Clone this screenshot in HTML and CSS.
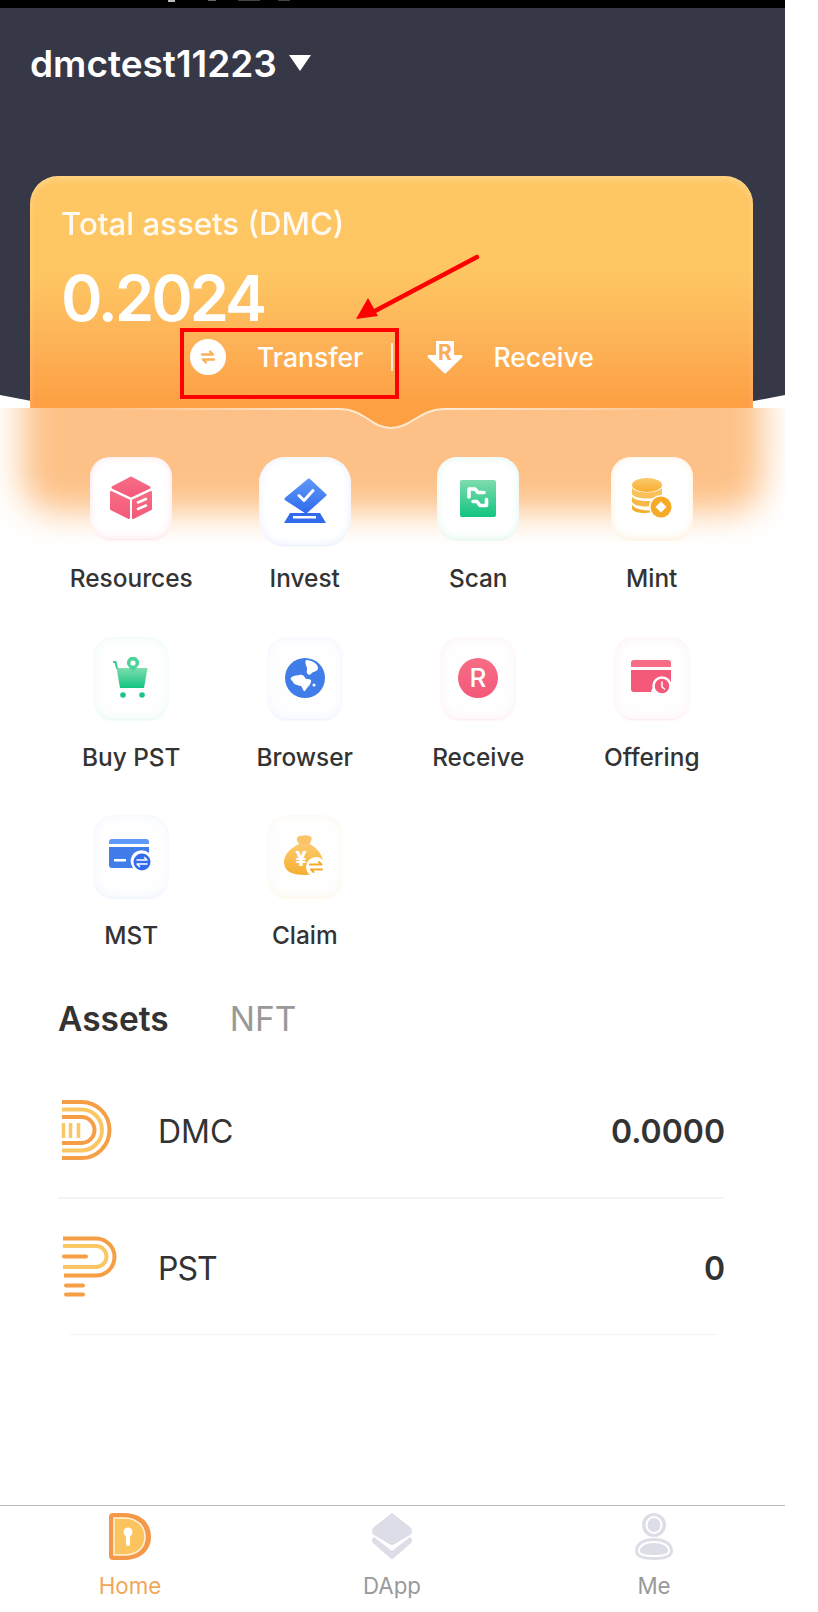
FILE: index.html
```html
<!DOCTYPE html>
<html lang="en">
<head>
  <meta charset="UTF-8">
  <title>Wallet</title>
  <meta name="viewport" content="width=device-width,initial-scale=1">
  <link rel="stylesheet" href="styles.css">
</head>
<body>
<div class="app">
  <div class="status-bar"></div>

  <section class="hero">
    <div class="account">
      <span class="account-name">dmctest11223</span>
      <span class="account-caret"></span>
    </div>
    <div class="card">
      <div class="card-title">Total assets (DMC)</div>
      <div class="card-amount">0.2024</div>
      <div class="card-actions">
        <svg class="act-icon" width="36" height="36" viewBox="0 0 36 36">
          <circle cx="18" cy="18" r="18" fill="#fff"/>
          <path d="M12 15.500h11l-3-3M24 20.500H13l3 3" fill="none" stroke="#fbb15a" stroke-width="2.400" stroke-linecap="round" stroke-linejoin="round"/>
        </svg>
        <span class="act-label act-transfer">Transfer</span>
        <span class="act-divider"></span>
        <svg class="act-icon act-receive-icon" width="36" height="34" viewBox="0 0 36 34">
          <path d="M9 1h18v14h7a1.500 1.500 0 0 1 1 2.500L19 33a1.500 1.500 0 0 1-2 0L1 17.500A1.500 1.500 0 0 1 2 15h7z" fill="#fff"/>
          <text x="18" y="20" text-anchor="middle" class="act-r">R</text>
        </svg>
        <span class="act-label">Receive</span>
      </div>
    </div>
    <div class="band">
      <svg class="band-notch" width="785" height="24" viewBox="0 0 785 24">
        <defs>
          <linearGradient id="notchLine" x1="0" x2="1" y1="0" y2="0">
            <stop offset="0" stop-color="#ffe9d0" stop-opacity="0"/>
            <stop offset="0.4" stop-color="#ffe9d0"/>
            <stop offset="0.6" stop-color="#ffe9d0"/>
            <stop offset="1" stop-color="#ffe9d0" stop-opacity="0"/>
          </linearGradient>
        </defs>
        <path d="M335 0H448C422 1 412 20 391 20C370 20 360 1 335 0z" fill="#fd9f43"/>
        <path d="M100 1H340C364 1 371 20 391 20C411 20 420 1 444 1H690" fill="none" stroke="url(#notchLine)" stroke-width="2"/>
      </svg>
    </div>
  </section>

  <!-- annotation drawn on top of the screenshot -->
  <div class="mark-box"></div>
  <svg class="mark-arrow" width="140" height="80" viewBox="0 0 140 80">
    <path d="M131 3L27 58" stroke="#f00" stroke-width="4.500" stroke-linecap="round"/>
    <path d="M10 65L22 44L32 62z" fill="#f00"/>
  </svg>

  <div class="shortcuts">
    <a class="item" style="--tint:#fde3e8">
      <span class="tile">
        <svg width="44" height="44" viewBox="0 0 44 44">
          <defs><linearGradient id="pink" x1="0" x2="0" y1="0" y2="1"><stop offset="0" stop-color="#f76d85"/><stop offset="1" stop-color="#f4597a"/></linearGradient></defs>
          <path d="M22 2L40 11.500L22 20L4 11.500z" fill="url(#pink)" stroke="url(#pink)" stroke-width="3" stroke-linejoin="round"/>
          <path d="M2 16L20 24.500V42L2 33z" fill="url(#pink)" stroke="url(#pink)" stroke-width="2" stroke-linejoin="round"/>
          <path d="M24 24.500L42 16V33L24 42z" fill="url(#pink)" stroke="url(#pink)" stroke-width="2" stroke-linejoin="round"/>
          <path d="M29 26.500L37 23M29 33L37 29.500" stroke="#fff" stroke-width="2.500" stroke-linecap="round"/>
        </svg>
      </span>
      <span class="label">Resources</span>
    </a>
    <a class="item item-big" style="--tint:#e6edff">
      <span class="tile">
        <svg width="44" height="46" viewBox="0 0 44 46">
          <defs><linearGradient id="blue" x1="0" x2="0" y1="0" y2="1"><stop offset="0" stop-color="#5d97f8"/><stop offset="1" stop-color="#326cec"/></linearGradient></defs>
          <path d="M26 2L42 17L23 34L3 21z" fill="url(#blue)" stroke="url(#blue)" stroke-width="3" stroke-linejoin="round"/>
          <path d="M16 17.500L21 22.500L30 12.500" fill="none" stroke="#fff" stroke-width="3" stroke-linecap="round" stroke-linejoin="round"/>
          <path d="M7 35H37L43 45H1z" fill="#326cec"/>
          <rect x="10" y="38" width="23" height="2.500" fill="#fff"/>
        </svg>
      </span>
      <span class="label">Invest</span>
    </a>
    <a class="item" style="--tint:#ddf6ec">
      <span class="tile">
        <svg width="36" height="37" viewBox="0 0 36 37">
          <defs><linearGradient id="green" x1="0" x2="0" y1="0" y2="1"><stop offset="0" stop-color="#7edcae"/><stop offset="1" stop-color="#12c480"/></linearGradient></defs>
          <rect width="36" height="37" rx="2" fill="url(#green)"/>
          <path d="M9 17V9H15L18 12.500H24" fill="none" stroke="#fff" stroke-width="3.600" stroke-linecap="round" stroke-linejoin="round"/>
          <path d="M13 21.500H17L20 25.500H26.500V19.500" fill="none" stroke="#fff" stroke-width="3.600" stroke-linecap="round" stroke-linejoin="round"/>
        </svg>
      </span>
      <span class="label">Scan</span>
    </a>
    <a class="item" style="--tint:#fdf0da">
      <span class="tile">
        <svg width="42" height="42" viewBox="0 0 42 42">
          <defs><linearGradient id="gold" x1="0" x2="0" y1="0" y2="1"><stop offset="0" stop-color="#fcca6f"/><stop offset="1" stop-color="#f6ae30"/></linearGradient></defs>
          <ellipse cx="16" cy="8" rx="15" ry="7" fill="url(#gold)"/>
          <path d="M1 10.500C4 17 28 17 31 10.500V17C28 23 4 23 1 17z" fill="#fac05a"/>
          <path d="M1 19.500C4 25.500 28 25.500 31 19.500V25C26 31 4 31 1 25z" fill="#f8b847"/>
          <path d="M1 27.500C4 33.500 18 34 21 33V35C14 37 3 36 1 32z" fill="#f6ae30"/>
          <circle cx="30" cy="30" r="12" fill="#fff"/>
          <circle cx="30" cy="30" r="10.500" fill="#f6ab28"/>
          <path d="M30 24.500L35.500 30L30 35.500L24.500 30z" fill="#fff"/>
        </svg>
      </span>
      <span class="label">Mint</span>
    </a>

    <a class="item item-soft" style="--tint:#dff7ed">
      <span class="tile">
        <svg width="36" height="42" viewBox="0 0 36 42">
          <path d="M0.500 5H2.500L4 11" fill="none" stroke="#33cb8e" stroke-width="2" stroke-linecap="round" stroke-linejoin="round"/>
          <path d="M3.500 11H34.500L31 31H7z" fill="url(#green)"/>
          <path d="M20 15L15 9A6 6 0 1 1 25 9z" fill="#4dd29c"/>
          <circle cx="20" cy="6" r="2.600" fill="#fff"/>
          <circle cx="10" cy="38" r="2.800" fill="#1cc583"/>
          <circle cx="29" cy="38" r="2.800" fill="#1cc583"/>
        </svg>
      </span>
      <span class="label">Buy PST</span>
    </a>
    <a class="item item-soft" style="--tint:#e8eeff">
      <span class="tile">
        <svg width="40" height="40" viewBox="0 0 40 40">
          <circle cx="20" cy="20" r="20" fill="#407de9"/>
          <path d="M21 2C27 2 33 6 33 10C33 14 28 13 26 16C24 18 21 16 22 12C23 9 19 6 21 2z" fill="#fff"/>
          <path d="M6 20C8 17 12 18 14 17C18 16 19 18 21 21C24 21 27 21 26 24C25 28 22 29 20 33C18 34 18 30 16 28C13 27 9 27 8 24C7 22 5 22 6 20z" fill="#fff"/>
          <circle cx="29" cy="27" r="1.500" fill="#fff"/>
        </svg>
      </span>
      <span class="label">Browser</span>
    </a>
    <a class="item item-soft" style="--tint:#fde6ea">
      <span class="tile">
        <svg width="40" height="40" viewBox="0 0 40 40">
          <circle cx="20" cy="20" r="20" fill="url(#pink)"/>
          <text x="20" y="29" text-anchor="middle" class="badge-r">R</text>
        </svg>
      </span>
      <span class="label">Receive</span>
    </a>
    <a class="item item-soft" style="--tint:#fde6ea">
      <span class="tile">
        <svg width="42" height="36" viewBox="0 0 42 36">
          <path d="M3 0H37Q40 0 40 3V7H0V3Q0 0 3 0z" fill="#f76d85"/>
          <path d="M0 10H40V24H28A10 10 0 0 0 20 32H3Q0 32 0 29z" fill="#f4597a"/>
          <circle cx="31" cy="26" r="8.500" fill="#f4597a" stroke="#fff" stroke-width="2.500"/>
          <path d="M31 22V27L33.500 29" fill="none" stroke="#fff" stroke-width="1.500" stroke-linecap="round"/>
        </svg>
      </span>
      <span class="label">Offering</span>
    </a>

    <a class="item item-soft" style="--tint:#e8eeff">
      <span class="tile">
        <svg width="44" height="34" viewBox="0 0 44 34">
          <path d="M3 0H37Q40 0 40 3V5H0V3Q0 0 3 0z" fill="#5d97f8"/>
          <path d="M0 8H40V14A11 11 0 0 0 24 29H3Q0 29 0 26z" fill="#407de9"/>
          <rect x="5" y="20" width="12" height="2.500" fill="#fff"/>
          <circle cx="33" cy="23" r="9.500" fill="#326cec" stroke="#fff" stroke-width="2"/>
          <path d="M28 21H38L35.500 18.500M38 25H28L30.500 27.500" fill="none" stroke="#fff" stroke-width="1.500" stroke-linecap="round" stroke-linejoin="round"/>
        </svg>
      </span>
      <span class="label">MST</span>
    </a>
    <a class="item item-soft" style="--tint:#fdf2dc">
      <span class="tile">
        <svg width="44" height="42" viewBox="0 0 44 42">
          <path d="M14 6C13 1 17 0 19 1C22 -0.500 27 0 29 3C28 6 27 8 26 10H17z" fill="#fbc469"/>
          <path d="M16 9H27C34 13 40 20 40 28C40 36 34 40 22 40C8 40 1 36 1 27C1 19 8 13 16 9z" fill="url(#gold)"/>
          <text x="18" y="31" text-anchor="middle" class="bag-yen">¥</text>
          <circle cx="33" cy="32" r="10" fill="#fff"/>
          <path d="M27 29.500H38.500L36 27M39 34.500H28L30.500 37" fill="none" stroke="#f6ab28" stroke-width="2" stroke-linecap="round" stroke-linejoin="round"/>
        </svg>
      </span>
      <span class="label">Claim</span>
    </a>
  </div>

  <div class="tabs">
    <span class="tab tab-active">Assets</span>
    <span class="tab">NFT</span>
  </div>

  <div class="asset">
    <svg class="asset-logo" width="52" height="60" viewBox="0 0 52 60">
      <path d="M2 2H21.500A28 28 0 0 1 21.500 58H2" fill="none" stroke="#f59e45" stroke-width="4"/>
      <path d="M2 9.500H21.500A20.500 20.500 0 0 1 21.500 50.500H2" fill="none" stroke="#fbc765" stroke-width="4"/>
      <path d="M2 17H21.500A13 13 0 0 1 21.500 43H2" fill="none" stroke="#f59e45" stroke-width="4"/>
      <path d="M3.500 23V38M10.500 23V38M18.500 23V38" stroke="#fbc765" stroke-width="3.500"/>
    </svg>
    <span class="asset-name">DMC</span>
    <span class="asset-value">0.0000</span>
  </div>
  <div class="rule"></div>
  <div class="asset asset-pst">
    <svg class="asset-logo" width="56" height="62" viewBox="0 0 56 62">
      <path d="M2 2.500H35A18.500 18.500 0 0 1 35 39.500H3" fill="none" stroke="#f59e45" stroke-width="4"/>
      <path d="M2 10H35A10.500 10.500 0 0 1 35 31H2" fill="none" stroke="#fbc765" stroke-width="4"/>
      <path d="M3 20.500H25M5 49.500H22M5 58.500H22" stroke="#f59e45" stroke-width="4" stroke-linecap="round"/>
    </svg>
    <span class="asset-name">PST</span>
    <span class="asset-value">0</span>
  </div>
  <div class="rule rule-short"></div>

  <nav class="tabbar">
    <a class="nav-item nav-active">
      <svg width="42" height="47" viewBox="0 0 42 47">
        <path d="M4 0H15C32 0 42 10 42 24C42 37 32 47 15 47H4Q0 47 0 43V4Q0 0 4 0z" fill="#f4994a"/>
        <path d="M5 5H15C28 5 36 13 36 24C36 35 28 42 15 42H5z" fill="#fcc45f" stroke="#fff3dc" stroke-width="1.500"/>
        <circle cx="19" cy="19" r="4.500" fill="#fff"/>
        <path d="M19 20V31" stroke="#fff" stroke-width="4" stroke-linecap="round"/>
      </svg>
      <span>Home</span>
    </a>
    <a class="nav-item">
      <svg width="42" height="47" viewBox="0 0 42 47">
        <path d="M21 0L39 14Q41 16 41 18V19Q41 21 39 22L24 31Q21 33 18 31L3 22Q1 21 1 19V18Q1 16 3 14z" fill="#dcdde6"/>
        <path d="M3 24L1 26Q0 28 2 30L19 45Q21 47 23 45L40 30Q42 28 41 26L39 24L21 38z" fill="#dcdde6"/>
        <path d="M10 27L21 35L32 27" fill="none" stroke="#fff" stroke-width="2" stroke-linejoin="round"/>
      </svg>
      <span>DApp</span>
    </a>
    <a class="nav-item">
      <svg width="40" height="47" viewBox="0 0 40 47">
        <ellipse cx="20" cy="12" rx="12" ry="12" fill="#dcdde6"/>
        <ellipse cx="20" cy="12" rx="7.500" ry="8" fill="#dcdde6" stroke="#fff" stroke-width="2"/>
        <path d="M20 25C30 25 39 29 39 38C39 44 32 47 20 47C8 47 1 44 1 38C1 29 10 25 20 25z" fill="#dcdde6"/>
        <path d="M20 29C28 29 35 32 35 38C35 42 29 43 20 43C11 43 5 42 5 38C5 32 12 29 20 29z" fill="#dcdde6" stroke="#fff" stroke-width="2"/>
      </svg>
      <span>Me</span>
    </a>
  </nav>
</div>
</body>
</html>
```

FILE: styles.css
```css
body {
  margin: 0;
  padding: 0;
  background: #fff;
  color: #333;
  font-family: 'Inter', 'Noto Sans', sans-serif;
}
.app {
  position: relative;
  width: 785px;
  min-height: 1612px;
  display: flex;
  flex-direction: column;
}
.status-bar {
  height: 8px;
  background:
    linear-gradient(#bbb, #bbb) 168px 0 / 7px 2px no-repeat,
    linear-gradient(#666, #666) 208px 0 / 8px 1px no-repeat,
    linear-gradient(#444, #444) 238px 0 / 22px 1px no-repeat,
    linear-gradient(#444, #444) 278px 0 / 12px 1px no-repeat,
    #000;
}

/* top dark part */
.hero {
  position: relative;
  height: 400px;
}
.hero::before {
  content: '';
  position: absolute;
  left: 0;
  top: 0;
  right: 0;
  bottom: 0;
  background: #363848;
  clip-path: polygon(0 0, 100% 0, 100% 387px, 96% 393px, 50% 399px, 4% 393px, 0 387px);
}
.account {
  position: relative;
  display: flex;
  align-items: center;
  padding: 32px 0 0 30px;
  height: 48px;
}
.account-name {
  font-size: 37px;
  font-weight: 600;
  line-height: 48px;
  color: #fff;
}
.account-caret {
  margin: -2px 0 0 12px;
  border-left: 11px solid transparent;
  border-right: 11px solid transparent;
  border-top: 16px solid #fff;
}
.card {
  position: relative;
  margin: 88px 32px 0 30px;
  height: 202px;
  padding: 30px 0 0 31px;
  border-radius: 28px 28px 0 0;
  background: linear-gradient(#fec764 0, #fec663 42%, #fdb257 72%, #fd9e42 100%);
  box-shadow: inset 0 3px 6px rgba(255,255,255,.25);
  color: #fff;
}
.card-title {
  font-size: 31.200px;
  font-weight: 500;
  line-height: 36px;
  opacity: .92;
}
.card-amount {
  margin-top: 20px;
  font-size: 63px;
  font-weight: 600;
  line-height: 72px;
  letter-spacing: -3px;
}
.card-actions {
  display: flex;
  align-items: center;
  height: 36px;
  margin: 5px 0 0 129px;
}
.act-label {
  font-size: 26.500px;
  font-weight: 500;
  margin-left: 31px;
}
.act-transfer {
  width: 105px;
}
.act-divider {
  width: 1.500px;
  height: 28px;
  margin-left: 29px;
  background: #ffe9cf;
}
.act-receive-icon {
  margin-left: 34px;
}
.act-r {
  font-size: 21px;
  font-weight: 700;
  fill: #fbae57;
}
.band {
  position: absolute;
  left: 0;
  right: 0;
  top: 100%;
  height: 140px;
  overflow: hidden;
}
.band::before {
  content: '';
  position: absolute;
  left: 22px;
  right: 22px;
  top: -50px;
  height: 154px;
  border-radius: 34px;
  background: #fdc187;
  filter: blur(17px);
}
.band-notch {
  position: absolute;
  left: 0;
  top: 0;
}
.mark-box {
  position: absolute;
  left: 180px;
  top: 328px;
  width: 211px;
  height: 63px;
  border: 4px solid #f00;
}
.mark-arrow {
  position: absolute;
  left: 346px;
  top: 254px;
}

/* shortcut grid */
.shortcuts {
  position: relative;
  display: grid;
  grid-template-columns: repeat(4, 173.500px);
  row-gap: 42.500px;
  padding: 49px 0 0 44.500px;
}
.item {
  display: flex;
  flex-direction: column;
  align-items: center;
  height: 136px;
}
.tile {
  display: flex;
  align-items: center;
  justify-content: center;
  width: 82px;
  height: 84px;
  border-radius: 20px;
  background: #fff;
  box-shadow: inset 0 0 8px var(--tint), 0 3px 2px -2px var(--tint);
}
.item-big .tile {
  width: 92px;
  height: 90px;
  border-radius: 26px;
  margin-bottom: -6px;
}
.item-soft .tile {
  width: 76px;
  background: #fefeff;
  margin-top: 1px;
  margin-bottom: -1px;
  box-shadow: inset 0 0 14px -4px var(--tint), 0 3px 3px -2px var(--tint);
}
.label {
  margin-top: 24px;
  font-size: 24.400px;
  font-weight: 500;
  line-height: 30px;
  color: #333;
  white-space: nowrap;
}

/* assets */
.tabs {
  display: flex;
  gap: 61px;
  margin-top: 47px;
  margin-bottom: 21px;
  padding-left: 58px;
  line-height: 44px;
}
.tab {
  font-size: 33.500px;
  color: #999;
}
.tab-active {
  font-weight: 600;
  color: #333;
}
.asset {
  display: flex;
  align-items: center;
  height: 135px;
  padding: 0 60px;
}
.asset-pst {
  height: 132px;
  padding-top: 3px;
  padding-left: 61px;
}
.asset-logo {
  flex: none;
}
.asset-pst .asset-logo {
  margin-top: -2px;
}
.asset-name {
  margin-left: 46px;
  padding-top: 4px;
  font-size: 32px;
  color: #333;
}
.asset-pst .asset-name {
  margin-left: 41px;
  padding-top: 0;
  letter-spacing: -1px;
}
.asset-value {
  margin-left: auto;
  padding-top: 4px;
  font-size: 32px;
  font-weight: 600;
  color: #333;
}
.asset-pst .asset-value {
  padding-top: 0;
}
.rule {
  height: 2px;
  margin: 0 61px 0 58px;
  background: #f4f4f4;
}
.rule-short {
  height: 1px;
  margin: 0 67px 0 70px;
}

/* bottom nav */
.tabbar {
  display: flex;
  margin-top: auto;
  height: 106px;
  border-top: 1px solid #bbb;
}
.nav-item {
  flex: 1;
  display: flex;
  flex-direction: column;
  align-items: center;
  padding-top: 7px;
  font-size: 22.300px;
  line-height: 30px;
  color: #999;
}
.nav-item:first-child {
  margin-left: -3px;
  padding-left: 2px;
}
.nav-item span {
  margin-top: 11px;
}
.nav-active {
  color: #f2a659;
}
.badge-r {
  font-size: 26px;
  font-weight: 500;
  fill: #fff;
}
.bag-yen {
  font-size: 20px;
  font-weight: 800;
  fill: #fff;
}
```
